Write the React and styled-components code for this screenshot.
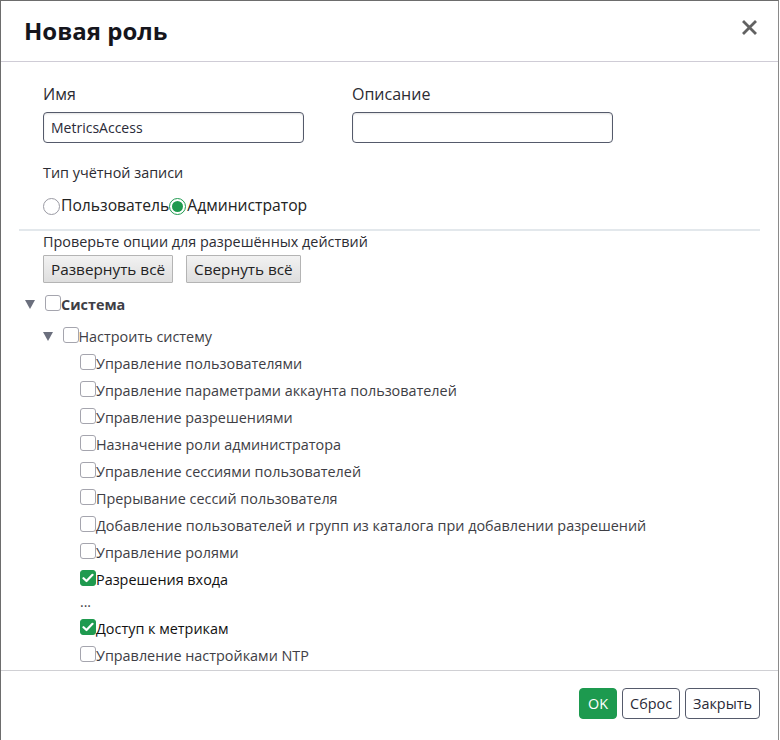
import React from 'react';
import styled, { createGlobalStyle } from 'styled-components';

const GlobalStyle = createGlobalStyle`
  html, body {
    margin: 0;
    padding: 0;
    background: #ffffff;
  }
  body {
    font-family: 'Open Sans', 'Noto Sans', sans-serif;
    color: #222;
  }
`;

const Modal = styled.div`
  box-sizing: border-box;
  width: 779px;
  height: 740px;
  display: flex;
  flex-direction: column;
  background: #fff;
  border: 1px solid #6d6d6d;
  border-bottom: none;
  border-right-color: #8a8a8a;
`;

const Header = styled.div`
  height: 60px;
  flex: none;
  display: flex;
  align-items: center;
  justify-content: space-between;
  padding: 0 20px 0 23px;
  border-bottom: 1px solid #cfccd6;
`;

const Title = styled.h1`
  margin: 0;
  font-size: 24px;
  font-weight: 700;
  color: #15151c;
  line-height: 32px;
`;

const CloseButton = styled.button`
  border: none;
  background: none;
  padding: 0;
  width: 18px;
  height: 18px;
  margin-top: -7px;
  display: flex;
  align-items: center;
  justify-content: center;
  cursor: pointer;
`;

const Body = styled.div`
  flex: 1;
  min-height: 0;
  overflow: hidden;
  padding-top: 21px;
`;

const FormRow = styled.div`
  display: flex;
  gap: 48px;
  padding-left: 42px;
`;

const Field = styled.div`
  display: flex;
  flex-direction: column;
  gap: 7px;
`;

const Label = styled.label`
  font-size: 16px;
  line-height: 22px;
  color: #2c2c33;
`;

const Input = styled.input`
  box-sizing: border-box;
  width: 261px;
  height: 31px;
  border: 1px solid #555a6b;
  border-radius: 4px;
  padding: 0 8px 0 7px;
  font-family: 'Open Sans', sans-serif;
  font-size: 14px;
  color: #2a2a38;
  box-shadow: inset 0 1px 2px rgba(0, 0, 0, 0.12);
  outline: none;
`;

const SmallLabel = styled.div`
  font-size: 14.4px;
  line-height: 20px;
  color: #2c2c33;
  padding-left: 42px;
  margin-top: ${p => p.top || 0}px;
`;

const RadioRow = styled.div`
  display: flex;
  align-items: center;
  padding-left: 42px;
  margin-top: 11px;
  height: 22px;
`;

const RadioItem = styled.label`
  display: flex;
  align-items: center;
  font-size: 15.7px;
  color: #222;
`;

const RadioCircle = styled.span`
  box-sizing: border-box;
  width: 17px;
  height: 17px;
  border-radius: 50%;
  margin: 2px 1px 0 0;
  border: 1px solid ${p => (p.checked ? '#1f9a4f' : '#9a9aa3')};
  background: #fff;
  display: flex;
  align-items: center;
  justify-content: center;

  &::after {
    content: '';
    width: 11px;
    height: 11px;
    border-radius: 50%;
    background: ${p => (p.checked ? '#1f9a4f' : 'transparent')};
  }
`;

const Permissions = styled.div`
  margin: 13px 18px 0 18px;
  border-top: 2px solid #e3e8ec;
`;

const Hint = styled.div`
  font-size: 14.4px;
  line-height: 20px;
  color: #2c2c33;
  padding-left: 24px;
  margin-top: 1px;
`;

const ToolRow = styled.div`
  display: flex;
  gap: 13px;
  padding-left: 24px;
  margin-top: 3px;
`;

const GrayButton = styled.button`
  height: 28px;
  padding: 0 7px;
  font-family: 'Open Sans', sans-serif;
  font-size: 15.3px;
  color: #222;
  background: linear-gradient(#f2f2f2, #dedede);
  border: 1px solid #b4b4b4;
  border-radius: 1px;
`;

const Tree = styled.div`
  margin-top: 8px;
`;

const Row = styled.div`
  display: flex;
  align-items: center;
  height: 27px;
  padding-left: ${p => p.indent}px;
  margin-top: ${p => p.gap || 0}px;
  font-size: 14.4px;
  font-weight: ${p => (p.bold ? 700 : 400)};
  color: ${p => (p.checked ? '#111' : '#3e3e45')};
  white-space: nowrap;
`;

const Toggle = styled.span`
  width: 10px;
  margin-right: 10px;
  display: flex;
  align-items: center;
  visibility: ${p => (p.hidden ? 'hidden' : 'visible')};
`;

const Box = styled.span`
  box-sizing: border-box;
  width: 16px;
  height: 16px;
  border-radius: 3px;
  margin-top: -3px;
  border: 1px solid ${p => (p.checked ? '#1f9a4f' : '#a5a5ae')};
  background: ${p => (p.checked ? '#1f9a4f' : '#fff')};
  display: flex;
  align-items: center;
  justify-content: center;
  flex: none;
`;

const Ellipsis = styled.div`
  height: 22px;
  line-height: 18px;
  padding-left: 61px;
  font-size: 14px;
  color: #3e3e45;
`;

const Footer = styled.div`
  box-sizing: border-box;
  height: 70px;
  flex: none;
  border-top: 1px solid #d0d0d4;
  display: flex;
  justify-content: flex-end;
  align-items: flex-start;
  gap: 5px;
  padding: 17px 18px 0 0;
`;

const ActionButton = styled.button`
  height: 31px;
  padding: 0 ${p => (p.primary ? 8 : 7)}px;
  font-family: 'Open Sans', sans-serif;
  font-size: 14.4px;
  border-radius: 4px;
  color: ${p => (p.primary ? '#fff' : '#2a2a38')};
  background: ${p => (p.primary ? '#1d9a4f' : '#fff')};
  border: 1px solid ${p => (p.primary ? '#1d9a4f' : '#555a6b')};
`;

const Check = () => (
  <svg width="12" height="10" viewBox="0 0 12 10">
    <path d="M1.5 5.2 L4.5 8 L10.5 1.8" fill="none" stroke="#fff" strokeWidth="2.2" strokeLinecap="round" strokeLinejoin="round" />
  </svg>
);

const Caret = () => (
  <svg width="10" height="9" viewBox="0 0 10 9">
    <path d="M0 0 H10 L5 9 Z" fill="#6b6f7d" />
  </svg>
);

const items = [
  { label: 'Управление пользователями' },
  { label: 'Управление параметрами аккаунта пользователей' },
  { label: 'Управление разрешениями' },
  { label: 'Назначение роли администратора' },
  { label: 'Управление сессиями пользователей' },
  { label: 'Прерывание сессий пользователя' },
  { label: 'Добавление пользователей и групп из каталога при добавлении разрешений' },
  { label: 'Управление ролями' },
  { label: 'Разрешения входа', checked: true },
];

const TreeRow = ({ label, level, checked, expandable, bold, gap }) => (
  <Row indent={6 + level * 17.5} checked={checked} bold={bold} gap={gap}>
    <Toggle hidden={!expandable}>
      <Caret />
    </Toggle>
    <Box checked={checked}>{checked && <Check />}</Box>
    <span>{label}</span>
  </Row>
);

export default function App() {
  return (
    <>
      <GlobalStyle />
      <Modal>
        <Header>
          <Title>Новая роль</Title>
          <CloseButton aria-label="Закрыть">
            <svg width="15" height="15" viewBox="0 0 15 15">
              <path d="M2 2 L13 13 M13 2 L2 13" stroke="#626262" strokeWidth="2.8" strokeLinecap="square" />
            </svg>
          </CloseButton>
        </Header>
        <Body>
          <FormRow>
            <Field>
              <Label>Имя</Label>
              <Input defaultValue="MetricsAccess" />
            </Field>
            <Field>
              <Label>Описание</Label>
              <Input defaultValue="" />
            </Field>
          </FormRow>
          <SmallLabel top={20}>Тип учётной записи</SmallLabel>
          <RadioRow>
            <RadioItem>
              <RadioCircle />
              Пользователь
            </RadioItem>
            <RadioItem>
              <RadioCircle checked />
              Администратор
            </RadioItem>
          </RadioRow>
          <Permissions>
            <Hint>Проверьте опции для разрешённых действий</Hint>
            <ToolRow>
              <GrayButton>Развернуть всё</GrayButton>
              <GrayButton>Свернуть всё</GrayButton>
            </ToolRow>
            <Tree>
              <TreeRow label="Система" level={0} expandable bold />
              <TreeRow label="Настроить систему" level={1} expandable gap={5} />
              {items.map(item => (
                <TreeRow key={item.label} label={item.label} level={2} checked={item.checked} />
              ))}
              <Ellipsis>...</Ellipsis>
              <TreeRow label="Доступ к метрикам" level={2} checked />
              <TreeRow label="Управление настройками NTP" level={2} />
            </Tree>
          </Permissions>
        </Body>
        <Footer>
          <ActionButton primary>OK</ActionButton>
          <ActionButton>Сброс</ActionButton>
          <ActionButton>Закрыть</ActionButton>
        </Footer>
      </Modal>
    </>
  );
}
